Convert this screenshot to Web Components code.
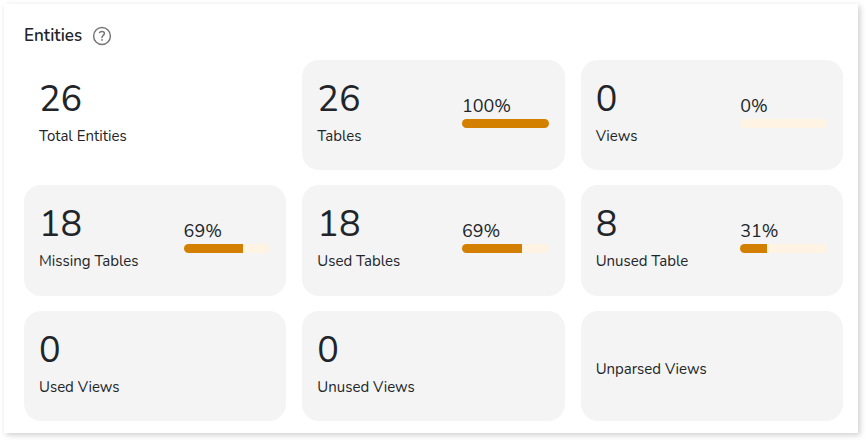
<!DOCTYPE html>
<html lang="en">
<head>
<meta charset="utf-8">
<meta name="viewport" content="width=device-width, initial-scale=1">
<title>Entities</title>
<style>
  html { height: 100%; background: #fff; }
  body {
    box-sizing: border-box;
    min-height: 100%;
    margin: 0;
    padding: 4px 10px 10px 4px;
    display: grid;
    font-family: Nunito, Lato, "Open Sans", sans-serif;
    color: #212529;
  }
</style>
</head>
<body>
<entity-panel heading="Entities">
  <stat-card plain value="26" label="Total Entities"></stat-card>
  <stat-card value="26" label="Tables" percent="100"></stat-card>
  <stat-card value="0" label="Views" percent="0"></stat-card>
  <stat-card value="18" label="Missing Tables" percent="69"></stat-card>
  <stat-card value="18" label="Used Tables" percent="69"></stat-card>
  <stat-card value="8" label="Unused Table" percent="31"></stat-card>
  <stat-card value="0" label="Used Views"></stat-card>
  <stat-card value="0" label="Unused Views"></stat-card>
  <stat-card label="Unparsed Views"></stat-card>
</entity-panel>

<template id="panel">
  <style>
    :host {
      box-sizing: border-box;
      display: flex;
      flex-direction: column;
      gap: 12px;
      padding: 20px 15px 12px 20px;
      background: #fff;
      box-shadow: 2px 2px 6px rgba(0, 0, 0, .2);
    }
    header { display: flex; align-items: center; gap: 10px; height: 24px; }
    h2 { margin: 0; font-size: 17px; line-height: 24px; font-weight: 600; }
    .grid {
      flex: 1;
      display: grid;
      grid-template-columns: repeat(auto-fit, minmax(220px, 1fr));
      grid-auto-rows: minmax(104px, 1fr);
      gap: 15px 16px;
    }
  </style>
  <header><h2></h2><help-button></help-button></header>
  <div class="grid"><slot></slot></div>
</template>

<template id="help">
  <style>
    :host { display: inline-flex; }
    button { display: flex; padding: 0; border: 0; background: none; color: #777; cursor: pointer; }
    svg { width: 20px; height: 20px; fill: none; stroke: currentColor; }
  </style>
  <button type="button" aria-label="Help">
    <svg viewBox="0 0 20 20" aria-hidden="true">
      <circle cx="10" cy="10" r="8.4" stroke-width="1.5"/>
      <path d="M7.5 6.5C8.2 5.9 9 5.6 10 5.6c1.5 0 2.4.8 2.4 2 0 1.8-2.4 1.9-2.4 3.8" stroke-width="1.5" stroke-linecap="round"/>
      <circle cx="10" cy="13.9" r=".9" fill="currentColor" stroke="none"/>
    </svg>
  </button>
</template>

<template id="card">
  <style>
    :host {
      box-sizing: border-box;
      display: grid;
      grid-template-columns: 5fr 3fr;
      align-items: center;
      padding: 12px 16px 12px 15px;
      border-radius: 17px;
      background: #f4f4f4;
    }
    :host([plain]) { background: none; }
    .value { font-size: 36px; line-height: 35px; font-weight: 400; }
    .label { font-size: 15px; line-height: 24px; padding-top: 7px; white-space: nowrap; }
  </style>
  <div class="stat"><div class="value"></div><div class="label"></div></div>
</template>

<template id="gauge">
  <style>
    :host { display: block; padding-bottom: 8px; }
    label { display: block; font-size: 18px; line-height: 24px; }
    progress {
      -webkit-appearance: none;
      appearance: none;
      display: block;
      width: 100%;
      height: 9px;
      margin-top: 1px;
      border: 0;
      border-radius: 5px;
      overflow: hidden;
      background: #fff3e4;
    }
    progress::-webkit-progress-bar { background: #fff3e4; }
    progress::-webkit-progress-value { background: #d38000; }
    progress::-moz-progress-bar { background: #d38000; }
  </style>
  <label for="bar"></label>
  <progress id="bar" max="100"></progress>
</template>

<script>
  class TemplateElement extends HTMLElement {
    mount(id) {
      const root = this.attachShadow({ mode: "open" });
      root.append(document.getElementById(id).content.cloneNode(true));
      return root;
    }
  }

  customElements.define("help-button", class extends TemplateElement {
    constructor() { super(); this.mount("help"); }
  });

  customElements.define("percent-gauge", class extends TemplateElement {
    connectedCallback() {
      if (this.shadowRoot) return;
      const root = this.mount("gauge");
      const percent = Number(this.getAttribute("percent"));
      root.querySelector("label").textContent = percent + "%";
      root.querySelector("progress").value = percent;
    }
  });

  customElements.define("stat-card", class extends TemplateElement {
    connectedCallback() {
      if (this.shadowRoot) return;
      const root = this.mount("card");
      const value = root.querySelector(".value");
      if (this.hasAttribute("value")) value.textContent = this.getAttribute("value");
      else value.remove();
      root.querySelector(".label").textContent = this.getAttribute("label");
      if (this.hasAttribute("percent")) {
        const gauge = document.createElement("percent-gauge");
        gauge.setAttribute("percent", this.getAttribute("percent"));
        root.append(gauge);
      }
    }
  });

  customElements.define("entity-panel", class extends TemplateElement {
    connectedCallback() {
      if (this.shadowRoot) return;
      this.mount("panel").querySelector("h2").textContent = this.getAttribute("heading");
    }
  });
</script>
</body>
</html>
